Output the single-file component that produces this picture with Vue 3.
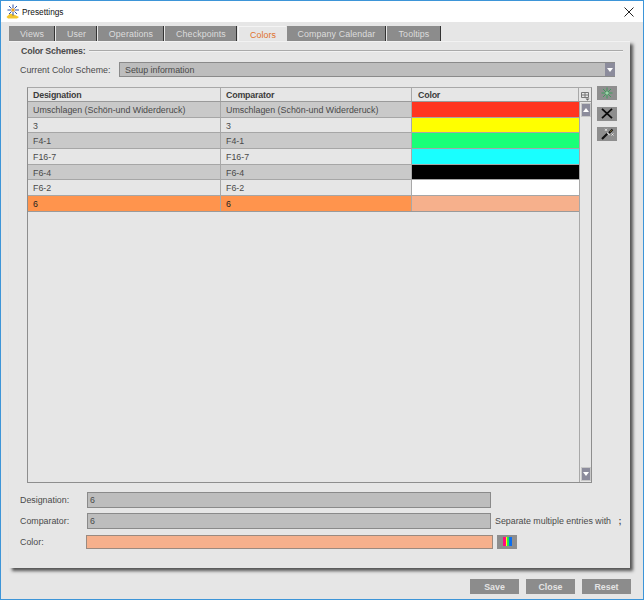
<template>
  <div class="window">
    <div class="titlebar">
      <svg class="logo" width="14" height="15" viewBox="0 0 14 15" fill="none">
        <path d="M0.5 13 L4 9.5 L9 11 L13 13 L11 14.5 L2 14.5 Z" fill="#f3c52e" />
        <g stroke="#2a4fa8" stroke-width="1">
          <path d="M7 0.5 V4 M7 8 V11.5 M1.5 6 H5 M9 6 H13 M3 2 L5.5 4.5 M11 2 L8.5 4.5 M3 10 L5.5 7.5 M11 10 L8.5 7.5" />
        </g>
        <circle cx="7" cy="6" r="1.7" fill="#f0a020" />
      </svg>
      <span class="title">Presettings</span>
      <svg class="close-x" width="10" height="10" viewBox="0 0 10 10">
        <path d="M0.5 0.5 L9.5 9.5 M9.5 0.5 L0.5 9.5" stroke="#222" stroke-width="1" fill="none" />
      </svg>
    </div>

    <div class="content">
      <div class="tabs">
        <div
          v-for="t in tabs"
          :key="t.name"
          class="tab"
          :class="{ active: t.name === 'Colors' }"
          :style="{ width: t.w + 'px' }"
        >{{ t.name }}</div>
      </div>

      <div class="panel">
        <div class="legend">
          <span class="legend-text">Color Schemes:</span>
          <span class="legend-line"></span>
        </div>

        <div class="scheme-row">
          <span class="scheme-label">Current Color Scheme:</span>
          <div class="combo">
            <span>Setup information</span>
            <span class="combo-arrow"><i class="tri-down"></i></span>
          </div>
        </div>

        <div class="table-row">
          <div class="table">
            <div class="table-main">
              <div class="thead">
                <div class="th col-a">Designation</div>
                <div class="th col-b">Comparator</div>
                <div class="th col-c">Color</div>
                <div class="th col-s">
                  <svg width="9" height="9" viewBox="0 0 9 9" fill="none">
                    <path d="M0.5 0.5 H7.5 V5.5 H0.5 Z M0.5 3 H7.5 M4 0.5 V5.5" stroke="#777" />
                    <path d="M4.5 6.5 H8.5 L6.5 8.8 Z" fill="#666" />
                  </svg>
                </div>
              </div>
              <div class="tbody">
                <div class="rows">
                  <div
                    v-for="(r, i) in rows"
                    :key="i"
                    class="tr"
                    :class="{ odd: i % 2 === 0, selected: r.selected }"
                  >
                    <div class="td col-a">{{ r.name }}</div>
                    <div class="td col-b">{{ r.name }}</div>
                    <div class="td col-c swatch" :style="{ background: r.color }"></div>
                  </div>
                </div>
                <div class="scrollbar">
                  <div class="sb-btn"><i class="tri-up"></i></div>
                  <div class="sb-btn"><i class="tri-down"></i></div>
                </div>
              </div>
            </div>
          </div>

          <div class="side-buttons">
            <button class="side-btn">
              <svg width="12" height="12" viewBox="0 0 12 12" fill="none">
                <path d="M6 0.5 V11.5 M0.5 6 H11.5 M2 2 L10 10 M10 2 L2 10" stroke="#3f9c5c" stroke-width="1" />
                <circle cx="6" cy="6" r="1.6" fill="#9ad4a8" />
              </svg>
            </button>
            <button class="side-btn">
              <svg width="12" height="11" viewBox="0 0 12 11" fill="none">
                <path d="M1 0.8 L11 10.2 M11 0.8 L1 10.2" stroke="#0a0a0a" stroke-width="1.8" />
              </svg>
            </button>
            <button class="side-btn">
              <svg width="13" height="12" viewBox="0 0 13 12" fill="none">
                <path d="M1 11 L7 5" stroke="#111" stroke-width="2.2" />
                <path d="M6 4.5 L8.5 7" stroke="#d8d8d8" stroke-width="1.2" />
                <path d="M4 0.8 L6 2.8 M6 0.8 L4 2.8 M10.5 5.5 L12.5 7.5 M12.5 5.5 L10.5 7.5" stroke="#eee" stroke-width="0.9" />
                <path d="M8 5 L11.5 1.5" stroke="#111" stroke-width="2" />
                <path d="M9.5 3.5 L10.5 2.5" stroke="#c9a94a" stroke-width="1" />
              </svg>
            </button>
          </div>
        </div>

        <div class="form">
          <label class="f-label">Designation:</label>
          <div class="f-input">6</div>
          <span></span>

          <label class="f-label">Comparator:</label>
          <div class="f-input">6</div>
          <span class="hint">Separate multiple entries with <b>;</b></span>

          <label class="f-label">Color:</label>
          <div class="color-row">
            <div class="color-box"></div>
            <button class="color-btn">
              <svg width="9" height="9" viewBox="0 0 9 9">
                <rect x="0" width="3" height="9" fill="#ff0a80" />
                <rect x="3" width="1.2" height="9" fill="#ffff00" />
                <rect x="4.2" width="1.8" height="9" fill="#10f050" />
                <rect x="6" width="3" height="9" fill="#0a6cf0" />
              </svg>
            </button>
          </div>
          <span></span>
        </div>
      </div>

      <div class="footer">
        <button class="foot-btn">Save</button>
        <button class="foot-btn">Close</button>
        <button class="foot-btn">Reset</button>
      </div>
    </div>
  </div>
</template>

<script setup>
const tabs = [
  { name: 'Views', w: 46 },
  { name: 'User', w: 41 },
  { name: 'Operations', w: 66 },
  { name: 'Checkpoints', w: 72 },
  { name: 'Colors', w: 48 },
  { name: 'Company Calendar', w: 99 },
  { name: 'Tooltips', w: 54 }
]

const rows = [
  { name: 'Umschlagen (Schön-und Widerderuck)', color: '#ff3520' },
  { name: '3', color: '#ffff00' },
  { name: 'F4-1', color: '#19ff78' },
  { name: 'F16-7', color: '#19ffff' },
  { name: 'F6-4', color: '#000000' },
  { name: 'F6-2', color: '#ffffff' },
  { name: '6', color: '#f6b08c', selected: true }
]
</script>

<style scoped>
.window {
  width: 644px;
  height: 600px;
  box-sizing: border-box;
  border: 1px solid #3d95d8;
  display: flex;
  flex-direction: column;
  background: #e6e6e6;
  font-family: "Liberation Sans", Arial, sans-serif;
  font-size: 8.85px;
  color: #4a4a4a;
}

.titlebar {
  height: 21px;
  flex: none;
  background: #fff;
  display: flex;
  align-items: center;
  padding: 0 6px 0 5px;
  color: #111;
  font-size: 8.3px;
}

.logo {
  margin-right: 2px;
}

.title {
  flex: 1;
}

.close-x {
  margin-right: 3px;
}

.content {
  flex: 1;
  display: flex;
  flex-direction: column;
  padding: 4px 13px 0 8px;
  min-height: 0;
}

.tabs {
  display: flex;
  gap: 1px;
  height: 15px;
  flex: none;
}

.tab {
  box-sizing: border-box;
  background: #8c8c8c;
  color: #dcdcdc;
  text-align: center;
  line-height: 17px;
  padding-left: 1px;
  border-right: 1px solid #333;
  letter-spacing: 0.1px;
}

.tab.active {
  background: #e6e6e6;
  color: #e0702a;
  line-height: 16px;
  border-right: none;
  border-top: 1px solid #f4f4f4;
  border-left: 1px solid #f4f4f4;
}

.panel {
  box-sizing: border-box;
  height: 527px;
  flex: none;
  padding: 0 7px 0 11px;
  background: #e6e6e6;
  box-shadow: 3px 3px 3px #555;
  border-top: 1px solid #f2f2f2;
}

.legend {
  display: flex;
  align-items: center;
  height: 17px;
  padding-left: 1px;
}

.legend-text {
  font-weight: bold;
  letter-spacing: -0.2px;
  margin-right: 3px;
}

.legend-line {
  flex: 1;
  height: 1px;
  background: #aaa;
  border-bottom: 1px solid #f2f2f2;
}

.scheme-row {
  display: flex;
  align-items: center;
  margin: 3px 8px 0 0;
  height: 15px;
}

.scheme-label {
  width: 99px;
  flex: none;
}

.combo {
  flex: 1;
  height: 15px;
  box-sizing: border-box;
  background: #bdbdbd;
  border-top: 1px solid #8a8a8a;
  border-left: 1px solid #8a8a8a;
  border-bottom: 1px solid #8a8a8a;
  display: flex;
  align-items: center;
  justify-content: space-between;
  padding-left: 5px;
}

.combo-arrow {
  width: 10px;
  height: 13px;
  background: #8c8c9c;
  display: flex;
  align-items: center;
  justify-content: center;
}

.tri-down {
  width: 0;
  height: 0;
  border-left: 3.5px solid transparent;
  border-right: 3.5px solid transparent;
  border-top: 4px solid #fff;
}

.tri-up {
  width: 0;
  height: 0;
  border-left: 3.5px solid transparent;
  border-right: 3.5px solid transparent;
  border-bottom: 4px solid #fff;
}

.table-row {
  display: flex;
  margin-top: 10px;
  gap: 5px;
}

.table {
  margin-left: 7px;
  width: 565px;
  height: 396px;
  flex: none;
  box-sizing: border-box;
  border: 1px solid #8e8e8e;
  border-top-color: #a8a8a8;
}

.table-main {
  height: 100%;
  display: flex;
  flex-direction: column;
}

.thead {
  display: flex;
  height: 13px;
  flex: none;
  border-bottom: 1px solid #9a9a9a;
  font-weight: bold;
  letter-spacing: -0.2px;
  color: #3c3c3c;
}

.th {
  box-sizing: border-box;
  line-height: 14px;
  padding-left: 5px;
  border-right: 1px solid #a8a8a8;
}

.th.col-c {
  padding-left: 6px;
}

.col-a { width: 193px; flex: none; box-sizing: border-box; }
.col-b { width: 191px; flex: none; box-sizing: border-box; }
.col-c { width: 167px; flex: none; box-sizing: border-box; }

.col-s {
  flex: 1;
  padding: 4px 0 0 2px;
  border-right: none;
  line-height: 0;
}

.tbody {
  flex: 1;
  display: flex;
  min-height: 0;
}

.rows {
  width: 551px;
  flex: none;
}

.tr {
  display: flex;
  height: 15.7px;
  box-sizing: border-box;
  border-bottom: 1px solid #a6a6a6;
}

.tr.odd {
  background: #c9c9c9;
}

.tr.selected {
  background: #ff944d;
  color: #222;
  border-bottom-color: #9a9a9a;
}

.td {
  line-height: 16px;
  padding-left: 5px;
  border-right: 1px solid #a8a8a8;
}

.swatch {
  border-right: none;
}

.scrollbar {
  flex: 1;
  border-left: 1px solid #a8a8a8;
  display: flex;
  flex-direction: column;
  justify-content: space-between;
  padding: 1px 0 1px 1px;
}

.sb-btn {
  width: 10px;
  height: 14px;
  background: #8c8c9c;
  display: flex;
  align-items: center;
  justify-content: center;
  border: 1px solid #c8c8c8;
  box-sizing: border-box;
}

.side-buttons {
  display: flex;
  flex-direction: column;
  gap: 6.5px;
  margin-top: -1px;
}

button {
  padding: 0;
  border: 0;
  font-family: inherit;
}

.side-btn {
  width: 20px;
  height: 14px;
  background: #8e8e8e;
  display: flex;
  align-items: center;
  justify-content: center;
}

.form {
  display: grid;
  grid-template-columns: 67px 404px auto;
  grid-auto-rows: 21px;
  align-items: center;
  margin-top: 6px;
}

.f-input {
  height: 16px;
  box-sizing: border-box;
  background: #bdbdbd;
  border: 1px solid #8a8a8a;
  line-height: 14px;
  padding-left: 2px;
}

.hint {
  padding-left: 4px;
  white-space: nowrap;
}

.hint b {
  margin-left: 5px;
}

.color-row {
  display: flex;
  gap: 4px;
  align-items: center;
  margin-left: -1px;
  width: 431px;
}

.color-box {
  width: 407px;
  height: 14px;
  flex: none;
  box-sizing: border-box;
  background: #f6b08c;
  border: 1px solid #9a8a80;
}

.color-btn {
  width: 20px;
  height: 14px;
  background: #8e8e8e;
  display: flex;
  align-items: center;
  justify-content: center;
}

.footer {
  display: flex;
  justify-content: flex-end;
  gap: 7px;
  margin: 11px -1px 0 0;
}

.foot-btn {
  width: 49px;
  height: 15px;
  background: #8c8c8c;
  color: #e4e4e4;
  font-weight: bold;
  font-size: 8.85px;
}
</style>

<style>
html, body {
  margin: 0;
  background: #e6e6e6;
}
</style>
